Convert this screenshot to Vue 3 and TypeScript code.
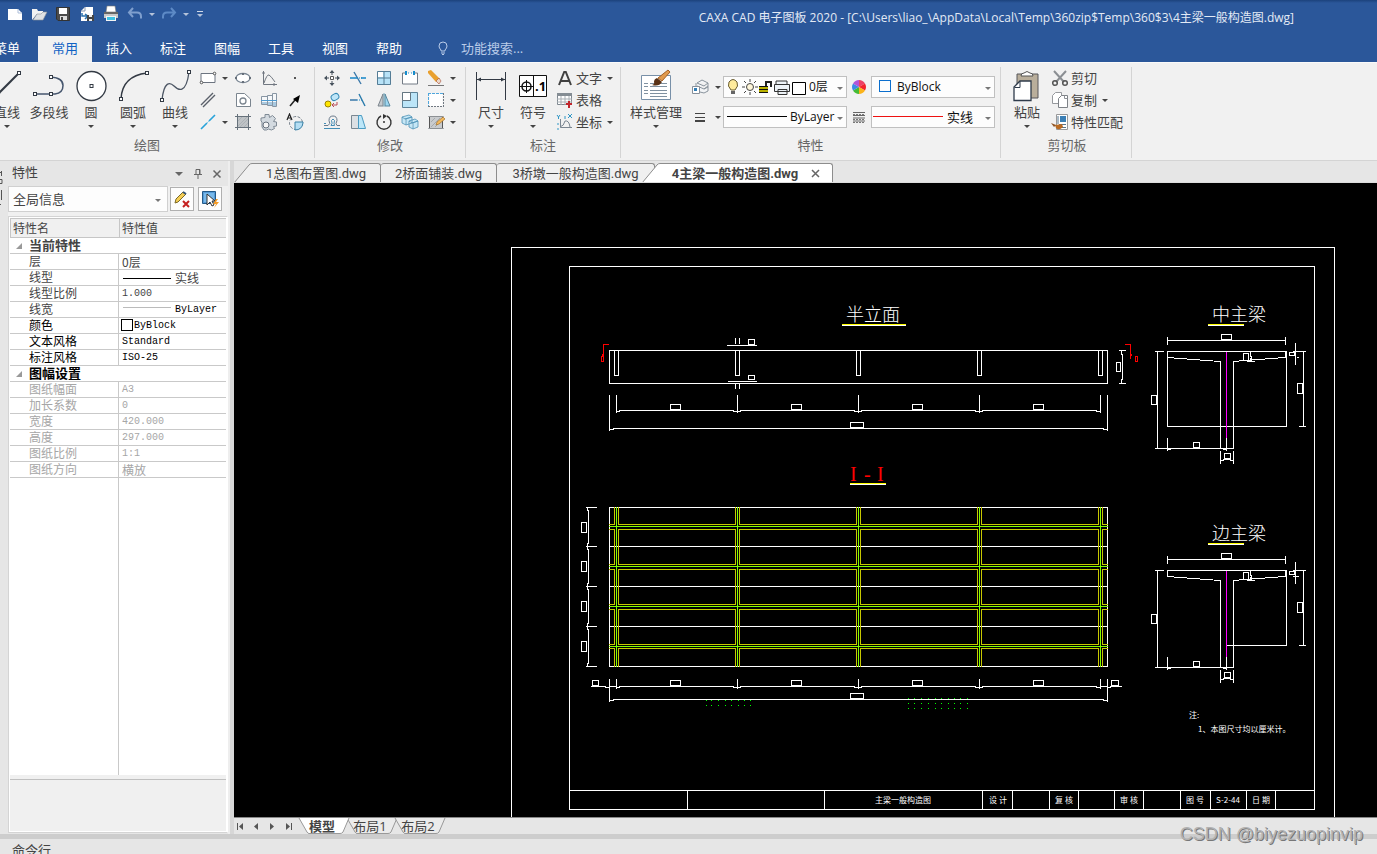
<script setup lang="ts">
import { ref } from 'vue'

interface Tool { icon: string; label: string; more?: boolean }
interface Row { name: string; value: string; kind?: string; dark?: boolean; dim?: boolean }

const quick: Tool[] = [
  { icon: 'fileNew', label: '新建' },
  { icon: 'folder', label: '打开' },
  { icon: 'save', label: '保存' },
  { icon: 'saveAs', label: '另存为' },
  { icon: 'print', label: '打印' },
  { icon: 'undo', label: '撤销', more: true },
  { icon: 'redo', label: '恢复', more: true },
]
const menus = ['菜单', '常用', '插入', '标注', '图幅', '工具', '视图', '帮助']
const activeMenu = ref('常用')
const query = ref('')

const drawBig: Tool[] = [
  { icon: 'line', label: '直线', more: true },
  { icon: 'polyline', label: '多段线' },
  { icon: 'circle', label: '圆', more: true },
  { icon: 'arc', label: '圆弧', more: true },
  { icon: 'curve', label: '曲线', more: true },
]
const drawSmall: Tool[] = [
  { icon: 'rect', label: '矩形', more: true },
  { icon: 'ellipse', label: '椭圆' },
  { icon: 'formula', label: '公式曲线' },
  { icon: 'point', label: '点' },
  { icon: 'parallel', label: '平行线' },
  { icon: 'region', label: '局部放大' },
  { icon: 'shaft', label: '孔轴' },
  { icon: 'arrow', label: '箭头' },
  { icon: 'axis', label: '中心线', more: true },
  { icon: 'hatch', label: '剖面线' },
  { icon: 'gear', label: '齿形' },
  { icon: 'detail', label: '填充' },
]
const editSmall: Tool[] = [
  { icon: 'move', label: '平移' },
  { icon: 'trim', label: '裁剪' },
  { icon: 'array', label: '阵列' },
  { icon: 'breakAt', label: '打断' },
  { icon: 'erase', label: '删除', more: true },
  { icon: 'copyMove', label: '平移复制' },
  { icon: 'extend', label: '延伸' },
  { icon: 'mirror', label: '镜像' },
  { icon: 'scale', label: '缩放' },
  { icon: 'explode', label: '分解', more: true },
  { icon: 'offset', label: '等距线' },
  { icon: 'stretch', label: '拉伸' },
  { icon: 'rotate', label: '旋转' },
  { icon: 'block', label: '块' },
  { icon: 'editHatch', label: '编辑剖面', more: true },
]
const noteBig: Tool[] = [
  { icon: 'dimension', label: '尺寸', more: true },
  { icon: 'symbol', label: '符号', more: true },
]
const noteSmall: Tool[] = [
  { icon: 'text', label: '文字', more: true },
  { icon: 'table', label: '表格' },
  { icon: 'coord', label: '坐标', more: true },
]
const clipSmall: Tool[] = [
  { icon: 'cut', label: '剪切' },
  { icon: 'copy', label: '复制', more: true },
  { icon: 'match', label: '特性匹配' },
]

const current: Row[] = [
  { name: '层', value: '0层', kind: 'cjk' },
  { name: '线型', value: '实线', kind: 'line' },
  { name: '线型比例', value: '1.000' },
  { name: '线宽', value: 'ByLayer', kind: 'thin' },
  { name: '颜色', value: 'ByBlock', kind: 'swatch', dark: true },
  { name: '文本风格', value: 'Standard', dark: true },
  { name: '标注风格', value: 'ISO-25', dark: true },
]
const sheet: Row[] = [
  { name: '图纸幅面', value: 'A3' },
  { name: '加长系数', value: '0' },
  { name: '宽度', value: '420.000' },
  { name: '高度', value: '297.000' },
  { name: '图纸比例', value: '1:1' },
  { name: '图纸方向', value: '横放', kind: 'cjk' },
]
const groups = [
  { title: '当前特性', rows: current, dim: false },
  { title: '图幅设置', rows: sheet, dim: true },
]

const docs = ['1总图布置图.dwg', '2桥面铺装.dwg', '3桥墩一般构造图.dwg', '4主梁一般构造图.dwg']
const activeDoc = ref(3)
const sheets = ['模型', '布局1', '布局2']
const activeSheet = ref(0)

const node = (x: number, y: number) => `<rect x="${x - 1.5}" y="${y - 1.5}" width="3" height="3" fill="#fff" stroke="#333a44"/>`

const icons: Record<string, string> = {
  fileNew: '<path d="M2 4h10l4 4v7H2z" fill="#fff"/><path d="M12 4v4h4" fill="none" stroke="#aebfda"/>',
  folder: '<path d="M2 15V4h5l1 2h5v3H7z" fill="#f2f2f2"/><path d="M3 15l4-6h4l2-2h4l-4 8z" fill="#dfe1e3" stroke="#8b9098" stroke-width=".6"/>',
  save: '<path d="M2.500 2.500h13v13H4l-1.500-1.500z" fill="#4c4c4c" stroke="#333"/><path d="M5 3h8v6H5z" fill="#fff"/><path d="M6 11h7v4H6z" fill="#ddd"/><path d="M7 12h2v3H7z" fill="#444"/>',
  saveAs: '<path d="M3 6l4-4h8v14H3z" fill="#fff"/><path d="M3 6h4V2" fill="none" stroke="#8898b0"/><path d="M4 8v3h5M7 9l3 2-3 3" fill="none" stroke="#2a70ad" stroke-width="1.500"/><path d="M9 10h7v6H9z" fill="#444"/><path d="M11 10h3v2h-3zM11 14h3v2h-3z" fill="#eee"/>',
  print: '<path d="M5 1h8l1 6H4z" fill="#fff" stroke="#777" stroke-width=".6"/><path d="M2 7h14v6H2z" fill="#c9c9c9"/><path d="M2 7h14v2H2z" fill="#666"/><path d="M4 11h10v5H4z" fill="#f4f4f4"/><path d="M5 12h8v3H5z" fill="#3ec3e4"/>',
  undo: '<path d="M7 3L3 7.500 7 12M3 7.500h8q4 0 4 4v2" fill="none" stroke="#7f9fce" stroke-width="2"/>',
  redo: '<path d="M11 3L15 7.500 11 12M15 7.500H7q-4 0-4 4v2" fill="none" stroke="#5d8ac6" stroke-width="2"/>',
  line: '<path d="M3 30L29 4" stroke="#333a44" stroke-width="2"/>' + node(29, 4) + node(3, 30),
  polyline: '<path d="M3 25h20q8-1 8-8.500T19 8" fill="none" stroke="#46566e" stroke-width="1.500"/>' + node(3, 25) + node(19, 25) + node(19, 8),
  circle: '<circle cx="17.500" cy="17" r="14.500" fill="#fff" stroke="#333a44" stroke-width="1.300"/>' + node(17.5, 17),
  arc: '<path d="M5 30Q6 7 31 4" fill="none" stroke="#333a44" stroke-width="1.500"/>' + node(5, 30) + node(31, 4),
  curve: '<path d="M4 31C6 12 12 13 16 17s12 9 15-14" fill="none" stroke="#4c5664" stroke-width="1.300"/>' + node(4, 31) + node(31, 3),
  rect: '<path d="M2 4.500h14v9H2z" fill="#fff" stroke="#6c7480"/><circle cx="2.500" cy="13.500" r="1.300" fill="#fff" stroke="#555"/><circle cx="15.500" cy="4.500" r="1.300" fill="#fff" stroke="#555"/>',
  ellipse: '<ellipse cx="9" cy="9" rx="7" ry="4.500" fill="#fff" stroke="#7b8794" stroke-width="1.300"/><path d="M1 8h2v2H1zM15 8h2v2h-2zM8 4h2v2H8zM8 12h2v2H8z" fill="#666f7a"/>',
  formula: '<path d="M3.500 2v13.500H17M2 4h3M14 14v3" fill="none" stroke="#707780"/><path d="M4 14Q7 5 9 6t6 7" fill="none" stroke="#707780"/>',
  point: '<path d="M8 8h2v2H8z" fill="#555"/>',
  parallel: '<path d="M2 14L14 2M4 16L16 4" stroke="#5a606a" stroke-width="1.400"/>',
  region: '<path d="M2.500 2.500h8l6 5.500v7.500h-14z" fill="#fff" stroke="#7b858f"/><circle cx="9" cy="10" r="3" fill="#fff" stroke="#7b858f" stroke-width="1.300"/>',
  shaft: '<path d="M1.500 5.500h6v8h-6zM7.500 4.500h5v10h-5zM12.500 2.500h4v13h-4z" fill="#f6f8fa" stroke="#8795a3"/><path d="M2 11h5v2H2zM8 11h4v3H8zM13 11h3v4h-3z" fill="#a9c9e0"/><path d="M1 9.500h16" stroke="#4d9ad0"/>',
  arrow: '<path d="M4 15l5-6" stroke="#222" stroke-width="1.500"/><path d="M14 4l-7 4 5 4z" fill="#000"/>',
  axis: '<path d="M2 16l6-6M10 8l6-6" stroke="#28a3da" stroke-width="1.600"/><path d="M8.500 9.500l1-1" stroke="#28a3da"/>',
  hatch: '<path d="M3 3h12v12H3z" fill="#bfc3c6"/><path d="M4 8l4-4M4 13l9-9M6 14l8-8M10 14l4-4" stroke="#a4aab0" stroke-width=".7"/><path d="M3.500 1v16M14.500 1v16M1 3.500h16M1 14.500h16" fill="none" stroke="#66717b"/>',
  gear: '<path d="M5 1.500h4l.5 3 3-2 3 3-2 3 3 .500v4l-3 .500 1 2-3 1.500-3-1-2 1H4l-2-3v-5l-1-1V5l4-.500z" fill="#d3dae0" stroke="#7f8a95"/><circle cx="6" cy="12" r="3" fill="#f6f6f6" stroke="#65707c"/>',
  detail: '<circle cx="10" cy="10" r="6.500" fill="none" stroke="#77818b" stroke-dasharray="3 1.500"/><path d="M9 9h8v1q-1 7-8 7z" fill="#b5def3" stroke="#3b82a7"/><path d="M1 7L3.500 1 6 7M2 5h3" fill="none" stroke="#222" stroke-width="1.200"/>',
  move: '<path d="M7.500 7.500h3v3h-3z" fill="#fff" stroke="#555"/><path d="M9 2v4M9 12v4M2 9h4M12 9h4" fill="none" stroke="#46515c"/><path d="M9 1l2.500 3h-5zM9 17l2.500-3h-5zM1 9l3-2.500v5zM17 9l-3-2.500v5z" fill="#46515c"/>',
  trim: '<path d="M1 9h7M12 9h5" stroke="#1787c8" stroke-width="1.500"/><path d="M5 3l7 12" stroke="#3977a8" stroke-width="1.400"/><path d="M8 9h5" stroke="#1787c8" stroke-dasharray="1 1"/>',
  array: '<path d="M2 2h14v14H2z" fill="#b7e2f7"/><path d="M3 3h5v5H3z" fill="#fff"/><path d="M2.500 2.500h13v13h-13zM9 2v14M2 9h14" fill="none" stroke="#557c95"/>',
  breakAt: '<path d="M5 4H1.500v11h15V4H13" fill="#fff" stroke="#737b85"/><path d="M5 2v4M13 2v4" stroke="#178dcc" stroke-width="2"/><path d="M7 4h1M10 4h1" stroke="#178dcc"/>',
  erase: '<path d="M1 2l3-1 9 9-4 3-8-9z" fill="#e9a02e"/><path d="M9 12l3-3 2 3-2 3z" fill="#ead8c8" stroke="#a84a30" stroke-width=".6"/><path d="M1 16.500h16" stroke="#777"/>',
  copyMove: '<circle cx="5" cy="13" r="3" fill="#ffe500" stroke="#9c8200"/><rect x="8" y="3" width="8" height="6" rx="3" fill="#bfe6f8" stroke="#3389b5" transform="rotate(-30 12 6)"/><path d="M9 14h5v-3M11 12l-2 2 2 2" fill="none" stroke="#b94a55"/>',
  extend: '<path d="M1 9h7" stroke="#3977a8" stroke-width="1.500"/><path d="M8 9h5" stroke="#1787c8" stroke-dasharray="1 1"/><path d="M10 3l6 12" stroke="#287aab" stroke-width="1.400"/>',
  mirror: '<path d="M8 3v12H3z" fill="#c5cace" stroke="#7c858d"/><path d="M10 3v12h5z" fill="#9ed7f1" stroke="#58879e"/><path d="M9 2v14" stroke="#79a9be"/>',
  scale: '<path d="M1.500 1.500h15v15h-15z" fill="#bce5f8" stroke="#5d8399"/><path d="M1.500 1.500h8v8h-8z" fill="#fff" stroke="#657681"/>',
  explode: '<path d="M2.500 2.500h13v13h-13z" fill="#fff"/><path d="M1 2.500h16M1.500 2v14" stroke="#4fa6dc" stroke-dasharray="3 1"/><path d="M1 15.500h16M16.500 2v14" stroke="#707881" stroke-dasharray="2 1"/>',
  offset: '<path d="M1 12.500h4Q8 11 6 7.500 6 3 10 3t4 4.500q-2 3.500 0 5h3" fill="none" stroke="#6a7a8b"/><path d="M1 15.500h16M1 10.500h2M8 12.500q2-2 .5-5 1.500-3 3 0-1 3 0 5z" fill="none" stroke="#438db6"/>',
  stretch: '<path d="M2.500 2.500h7v13h-7z" fill="#dce0e4" stroke="#7a8791"/><path d="M9.500 2.500h3l4 13h-7z" fill="#bce6f8" stroke="#4b9bc2"/>',
  rotate: '<path d="M6 3A7 7 0 1 0 12 3" fill="none" stroke="#333" stroke-width="1.400"/><path d="M8 1l4 2-4 3z" fill="#333"/><circle cx="9" cy="9" r="1" fill="#333"/>',
  block: '<path d="M1 4l7-2 3 2-7 2zM1 4v6l4 2V6M4 6l7-2v6l-6 2M8 8l6-2 3 2-6 2zM8 8v6l4 2v-6M11 10l6-2v6l-5 2" fill="#c5e7f6" stroke="#4f93b8" stroke-width=".8"/>',
  editHatch: '<path d="M2.500 3.500h13v12h-13z" fill="#c9cbcd" stroke="#555"/><path d="M4 9l4-4M4 14l9-9M8 14l6-6M1 3.500h16M1 15.500h16" stroke="#9a9fa4" stroke-width=".8"/><path d="M9 12l1-3 6-5 2 2-6 5z" fill="#f3b95d" stroke="#996720" stroke-width=".6"/>',
  dimension: '<path d="M2.500 3v28M31.500 3v28M3 10.500h28" stroke="#333a44"/><path d="M3 10.500l4-2v4zM31 10.500l-4-2v4z" fill="#333a44"/>',
  symbol: '<path d="M3.500 6.500h27v21h-27z" fill="#fff" stroke="#111"/><path d="M17.500 7v20M4 17.500h13M10.500 11v13" stroke="#111"/><circle cx="10.500" cy="17.500" r="4.500" fill="none" stroke="#111" stroke-width="1.500"/><text x="19" y="22" font-size="13" font-weight="700" font-family="Open Sans">.1</text>',
  text: '<path d="M3 16L8.200 3h1.600L15 16M5 12h8" fill="none" stroke="#414141" stroke-width="2"/>',
  table: '<path d="M1.500 2.500h14v11h-14z" fill="#fff" stroke="#7f8890"/><path d="M1 2h15v3H1z" fill="#858d94"/><path d="M1 8h15M1 11h15M5 5v9M9 5v9M13 5v9" stroke="#a8afb4"/><path d="M12 10h2v2h2v2h-2v3h-2v-3h-2v-2h2z" fill="#c1272d"/>',
  coord: '<path d="M4.500 6v8.500H16M4 14q4-1 5-6 4-1 5 6" fill="none" stroke="#7b8691"/><path d="M1 2l1.500 2L4 2M2.500 4v2M12 1l4 4M16 1l-4 4M9 3v3M2 10v2M2 15v2" fill="none" stroke="#3096c5"/>',
  style: '<path d="M2.500 6.500h29v24h-29z" fill="#fff" stroke="#7890a8"/><path d="M5 14.500h4M11 14.500h17M5 17.500h4M11 17.500h17M5 21.500h4M11 21.500h17M5 24.500h4M11 24.500h17M11 27.500h17" stroke="#8091a0"/><path d="M29 1l2 2-8 9-4-3z" fill="#e19a4d" stroke="#a46125"/><path d="M18 9l5 4q-3 5-10 3 3-1 2-3 0-3 3-4z" fill="#593116"/>',
  layers: '<path d="M6 5l5-3 6 3v8l-4 2-4-1M6 5l7 3 4-3M6 8l7 3 4-3M5 5v3M13 11l4-2" fill="#f2f4f6" stroke="#8a949d"/><path d="M1.500 8.500h7v7h-7z" fill="#fff" stroke="#87909a"/><path d="M3 10h3v3H3z" fill="#327eb6"/>',
  weights: '<path d="M4 5.500h10M4 9.500h10" stroke="#444"/><path d="M4 13h10" stroke="#444" stroke-width="2"/>',
  linetypes: '<path d="M3 4.500h12M3 7.500h12M3 10h12M3 13h12" stroke="#666"/><path d="M3 6.500h12M3 11.500h12M3 14.500h12" stroke="#777" stroke-dasharray="2 1"/>',
  wheel: '<g transform="translate(9 9)"><path d="M0 0V-7A7 7 0 0 1 6-3.500z" fill="#ec4266"/><path d="M0 0L6-3.500A7 7 0 0 1 6 3.500z" fill="#f3232c"/><path d="M0 0L6 3.500A7 7 0 0 1 0 7z" fill="#fbb41b"/><path d="M0 0V7A7 7 0 0 1-6 3.500z" fill="#46bb35"/><path d="M0 0L-6 3.500A7 7 0 0 1-6-3.500z" fill="#3b8be6"/><path d="M0 0L-6-3.500A7 7 0 0 1 0-7z" fill="#b255d8"/></g>',
  paste: '<path d="M7 5h21v24H7z" fill="#b9ae9b" stroke="#56575a"/><path d="M11 7q0-3 3-3 3-3 6 0 3 0 3 3z" fill="#fff" stroke="#555"/><path d="M4 31.500V18l6-6h11v19.500z" fill="#fff" stroke="#2f3b4b" stroke-width="1.300"/><path d="M4.500 18.500H10V12" fill="none" stroke="#2f3b4b"/>',
  cut: '<path d="M3 2l10 11M15 2L5 13" stroke="#8b8f93" stroke-width="2"/><circle cx="4" cy="14" r="2.300" fill="none" stroke="#555" stroke-width="1.500"/><circle cx="14" cy="14" r="2.300" fill="none" stroke="#555" stroke-width="1.500"/>',
  copy: '<path d="M1.500 4.500l3-3h6v11h-9z" fill="#fff" stroke="#96999d"/><path d="M7.500 7.500l3-3h6v12h-9z" fill="#fff" stroke="#7e8287"/><path d="M13.500 4.500v3h3" fill="none" stroke="#8e9297"/>',
  match: '<path d="M5.500 1.500h11v15h-11z" fill="#fff" stroke="#999"/><path d="M9 3h6v6H9z" fill="#3a7fb5"/><path d="M8 11.500h7M9 14.500h6M7 3v8" stroke="#57758c"/><path d="M4 12l7-1 1 3q-4 4-7 1z" fill="#b96a22"/><path d="M0 10l5 2-2 2z" fill="#8e5527"/>',
  cleanPick: '<path d="M2 13l1-4 7-7 3 2-8 8z" fill="#f5ce54" stroke="#7b6a28"/><path d="M10 2l3 2" stroke="#35577a" stroke-width="2"/><path d="M10 11l6 6M16 11l-6 6" stroke="#c52020" stroke-width="2"/>',
  quickPick: '<path d="M1.500 1.500h13v12h-13z" fill="#559bd7" stroke="#245a88"/><path d="M3 3h10v9H3z" fill="#79b9ea"/><path d="M6 4v11l3-3 2 4 2-1-2-4h3z" fill="#fff" stroke="#333"/><path d="M15 9l-3 5h3l-2 4 5-6h-3l2-3z" fill="#f69b24"/>',
}

/* Drawing primitives: one-pixel strokes built as filled strips. */
const H = (x1: number, x2: number, y: number) => `M${x1} ${y}H${x2 + 1}V${y + 1}H${x1}Z`
const V = (x: number, y1: number, y2: number) => `M${x} ${y1}H${x + 1}V${y2 + 1}H${x}Z`
const B = (x1: number, y1: number, x2: number, y2: number) => H(x1, x2, y1) + H(x1, x2, y2) + V(x1, y1, y2) + V(x2, y1, y2)

const axes = [616, 737, 858, 979, 1100]
const boxes = [670, 791, 912, 1033]
const girders = [526, 566, 606, 646]

function spanDims(y: number): string {
  let d = ''
  for (let i = 0; i < 4; i++) {
    const a = axes[i], b = axes[i + 1]
    d += H(a + 3, b - 4, y) + H(b - 4, b, y + 1) + H(a, a + 3, y + 1) + B(boxes[i], y - 6, boxes[i] + 10, y - 1)
  }
  return d
}
function totalDim(y: number): string {
  return H(613, 1103, y) + H(609, 613, y + 1) + H(1103, 1107, y + 1) + B(850, y - 6, 863, y - 1)
}

const elevation = B(609, 350, 1107, 383)
  + axes.map(x => B(x - 2, 350, x + 2, 375) + V(x, 395, 412)).join('')
  + V(735, 338, 343) + V(739, 338, 343) + V(735, 384, 388) + V(739, 384, 388)
  + H(727, 756, 345) + H(728, 756, 381) + B(748, 339, 754, 344) + B(748, 375, 754, 379)
  + H(1119, 1125, 350) + H(1119, 1125, 383) + V(1121, 350, 354) + V(1122, 354, 379) + V(1121, 379, 383) + B(1116, 362, 1120, 371)
  + V(609, 395, 430) + V(1107, 395, 430) + spanDims(410) + totalDim(428)

const cutMarks = V(603, 344, 356) + H(603, 608, 344) + B(601, 356, 603, 361) + V(602, 354, 356)
  + H(1125, 1130, 344) + V(1130, 344, 358) + V(1131, 354, 355) + B(1135, 356, 1137, 361)

const planWhite = B(609, 507, 1107, 666) + [546, 586, 626].map(y => H(609, 1107, y)).join('')
  + [507, 546, 586, 626, 666].map(y => H(586, 596, y)).join('')
  + [507, 546, 586, 626].map((y, i) => {
    const e = [546, 586, 626, 666][i]
    return V(587, y, y + 3) + V(588, y + 3, e - 3) + V(587, e - 3, e)
  }).join('')
  + [522, 561, 601, 641].map(y => B(581, y, 586, y + 10)).join('')
  + axes.map(x => V(x, 679, 688)).join('') + V(609, 679, 701) + V(1107, 679, 701)
  + spanDims(686) + totalDim(699)
  + H(591, 605, 686) + H(605, 609, 687) + H(609, 616, 686) + H(1100, 1107, 686) + H(1107, 1110, 687) + H(1110, 1121, 686)
  + B(592, 680, 598, 685) + B(1111, 680, 1118, 685)

const planYellow = (() => {
  let d = ''
  const xs = [607, ...axes, 1109]
  const ys = [505, ...girders, 668]
  for (const g of girders) {
    const low = g === 646 ? g + 2 : g + 3
    for (let i = 0; i < xs.length - 1; i++) d += H(xs[i] + 2, xs[i + 1] - 2, g - 2) + H(xs[i] + 2, xs[i + 1] - 2, low)
  }
  for (const x of axes) {
    for (let i = 0; i < ys.length - 1; i++) {
      const top = i === 0 ? 507 : ys[i] + 3
      d += V(x - 2, top, ys[i + 1] - 2) + V(x + 2, top, ys[i + 1] - 2)
    }
  }
  return d
})()
const planGreen = axes.map(x => V(x, 507, 666)).join('') + girders.map(y => H(609, 1107, y)).join('')
const dots = [700, 705].flatMap(y => [706, 711, 718, 725, 731, 738, 744, 750].map(x => H(x, x, y))).join('')
  + [698, 703, 708].flatMap(y => [908, 914, 921, 928, 935, 941, 948, 954, 960, 967].map(x => H(x, x, y))).join('')

function section(edge: boolean): string {
  return H(1167, 1285, 340) + V(1167, 337, 344) + V(1285, 337, 344) + B(1221, 334, 1231, 339)
    + H(1167, 1286, 351) + V(1286, 351, 426) + V(1285, 351, 357)
    + (edge ? V(1167, 351, 357) + H(1226, 1286, 426) + H(1293, 1298, 357) : V(1167, 351, 426) + H(1167, 1286, 426) + H(1297, 1298, 357))
    + V(1220, 361, 448) + V(1233, 361, 448) + H(1155, 1233, 448)
    + V(1157, 351, 448) + H(1155, 1163, 351) + B(1151, 395, 1156, 404)
    + V(1167, 438, 450) + H(1167, 1170, 449) + V(1226, 438, 450) + H(1223, 1226, 449) + B(1193, 442, 1199, 447)
    + V(1220, 451, 463) + V(1233, 451, 463) + H(1220, 1223, 460) + H(1223, 1230, 459) + H(1230, 1233, 460) + B(1224, 453, 1230, 458)
    + B(1243, 353, 1248, 360) + V(1250, 352, 356) + V(1251, 356, 359) + V(1250, 358, 361) + H(1247, 1254, 361)
    + V(1295, 343, 364) + B(1289, 352, 1294, 355) + H(1293, 1305, 351)
    + V(1303, 351, 426) + H(1299, 1305, 426) + B(1297, 383, 1302, 393)
}
const sections = [
  { title: '中主梁', shift: 0, path: section(false) },
  { title: '边主梁', shift: 219, path: section(true) },
]

const frame = H(511, 1334, 247) + V(511, 247, 818) + V(1334, 247, 818) + B(569, 266, 1314, 809) + H(569, 1314, 790)
  + [687, 824, 982, 1012, 1049, 1078, 1114, 1143, 1180, 1210, 1246, 1275].map(x => V(x, 790, 809)).join('')

const blockTexts = [
  { x: 903, t: '主梁一般构造图' }, { x: 998, t: '设 计' }, { x: 1064, t: '复 核' }, { x: 1129, t: '审 核' },
  { x: 1195, t: '图 号' }, { x: 1228, t: 'S-2-44' }, { x: 1261, t: '日 期' },
]
</script>

<template>
  <div class="app">
    <header class="top">
      <div class="title-row">
        <div class="quick">
          <template v-for="q in quick" :key="q.icon">
            <button class="q-btn" :aria-label="q.label"><svg width="18" height="18" v-html="icons[q.icon]" /></button>
            <button v-if="q.more" class="q-more" :aria-label="q.label + '列表'"><i class="caret pale" /></button>
          </template>
          <button class="q-more custom" aria-label="自定义快速访问"><i class="bar" /><i class="caret pale" /></button>
        </div>
        <div class="title">CAXA CAD 电子图板 2020 - [C:\Users\liao_\AppData\Local\Temp\360zip$Temp\360$3\4主梁一般构造图.dwg]</div>
      </div>
      <nav class="menu">
        <button v-for="m in menus" :key="m" class="menu-tab" :class="{ active: m === activeMenu, first: m === '菜单' }" @click="activeMenu = m">{{ m }}</button>
        <label class="search">
          <svg width="12" height="14" aria-hidden="true"><path d="M4 9Q2 7 2 5a4 4 0 0 1 8 0q0 2-2 4v1H4zM4 12h4M5 13.500h2" fill="none" stroke="#b9cbe8" /></svg>
          <input v-model="query" aria-label="功能搜索" placeholder="功能搜索...">
        </label>
      </nav>
    </header>

    <section class="ribbon">
      <div class="group draw">
        <div class="tools">
          <button v-for="t in drawBig" :key="t.icon" class="big">
            <svg width="34" height="34" v-html="icons[t.icon]" /><span>{{ t.label }}</span><i class="caret" :class="{ none: !t.more }" />
          </button>
          <div class="grid draw-grid">
            <template v-for="(t, i) in drawSmall" :key="t.icon">
              <button class="small" :aria-label="t.label"><svg width="18" height="18" v-html="icons[t.icon]" /></button>
              <button v-if="t.more" class="more" :aria-label="t.label + '列表'"><i class="caret" /></button>
              <span v-else-if="i % 4 === 0" />
            </template>
          </div>
        </div>
        <div class="group-name">绘图</div>
      </div>

      <div class="group edit">
        <div class="tools">
          <div class="grid edit-grid">
            <template v-for="t in editSmall" :key="t.icon">
              <button class="small" :aria-label="t.label"><svg width="18" height="18" v-html="icons[t.icon]" /></button>
              <button v-if="t.more" class="more" :aria-label="t.label + '列表'"><i class="caret" /></button>
            </template>
          </div>
        </div>
        <div class="group-name">修改</div>
      </div>

      <div class="group note">
        <div class="tools">
          <button v-for="t in noteBig" :key="t.icon" class="big"><svg width="34" height="34" v-html="icons[t.icon]" /><span>{{ t.label }}</span><i class="caret" /></button>
          <div class="stack">
            <button v-for="t in noteSmall" :key="t.icon" class="wide"><svg width="18" height="18" v-html="icons[t.icon]" />{{ t.label }}<i v-if="t.more" class="caret" /></button>
          </div>
        </div>
        <div class="group-name">标注</div>
      </div>

      <div class="group props">
        <div class="tools">
          <button class="big style"><svg width="34" height="34" v-html="icons.style" /><span>样式管理</span><i class="caret" /></button>
          <div class="prop-grid">
            <button class="small" aria-label="图层"><svg width="18" height="18" v-html="icons.layers" /></button>
            <button class="more" aria-label="图层列表"><i class="caret" /></button>
            <div class="combo layer">
              <select aria-label="当前图层"><option>0层</option></select>
              <svg class="deco" width="84" height="20" aria-hidden="true">
                <path d="M7 13Q3 9 5 5q4-5 8 0 2 4-2 8z" fill="#ffeb9c" stroke="#695c32" /><path d="M7 14h4v3H7z" fill="#666" />
                <circle cx="26" cy="10" r="3.500" fill="#fff7da" stroke="#444" /><path d="M26 2v3M26 15v3M18 10h3M31 10h3M20 4l2 2M32 4l-2 2M20 16l2-2M32 16l-2-2" stroke="#444" />
                <path d="M35 9h9v7h-9z" fill="#b9b100" /><path d="M35 9.500h9M35 12.500h9M35 15.500h9" stroke="#111" /><path d="M42 9V5h5v5" fill="none" stroke="#222" stroke-width="2" />
                <path d="M52 7V4h11v3M50.500 7.500h15v7h-15zM54 12.500h9v5h-9z" fill="#edf2f6" stroke="#333" />
                <path d="M68.500 5.500h13v12h-13z" fill="#fff" stroke="#000" />
              </svg>
              <i class="caret soft" />
            </div>
            <button class="small" aria-label="颜色"><svg width="18" height="18" v-html="icons.wheel" /></button>
            <div class="combo color">
              <select aria-label="当前颜色"><option>ByBlock</option></select>
              <i class="deco blue-box" /><i class="caret soft" />
            </div>
            <button class="small" aria-label="线宽"><svg width="18" height="18" v-html="icons.weights" /></button>
            <button class="more" aria-label="线宽列表"><i class="caret" /></button>
            <div class="combo weight">
              <select aria-label="当前线宽"><option>ByLayer</option></select>
              <i class="deco rule black" /><i class="caret soft" />
            </div>
            <button class="small" aria-label="线型"><svg width="18" height="18" v-html="icons.linetypes" /></button>
            <div class="combo ltype">
              <select aria-label="当前线型"><option>实线</option></select>
              <i class="deco rule red" /><i class="caret soft" />
            </div>
          </div>
        </div>
        <div class="group-name">特性</div>
      </div>

      <div class="group clip">
        <div class="tools">
          <button class="big"><svg width="34" height="34" v-html="icons.paste" /><span>粘贴</span><i class="caret" /></button>
          <div class="stack">
            <button v-for="t in clipSmall" :key="t.icon" class="wide"><svg width="18" height="18" v-html="icons[t.icon]" />{{ t.label }}<i v-if="t.more" class="caret" /></button>
          </div>
        </div>
        <div class="group-name">剪切板</div>
      </div>
    </section>

    <main class="work">
      <div class="gutter"><svg width="8" height="44" aria-hidden="true"><path d="M0 11.500h2M1.500 10v5M0 18.500h2v4H0M1.500 29v10M0 43.500h1" fill="none" stroke="#555" /></svg></div>
      <aside class="panel">
        <div class="panel-head">
          <h2>特性</h2>
          <button aria-label="菜单"><i class="caret wide-caret" /></button>
          <button aria-label="固定"><svg width="10" height="12"><path d="M3 1.500h4v5H3zM1 6.500h8M5 7v4M6.500 2v4" fill="none" stroke="#666" /></svg></button>
          <button aria-label="关闭"><svg width="10" height="12"><path d="M1.500 2.500l7 7M8.500 2.500l-7 7" stroke="#666" stroke-width="1.500" /></svg></button>
        </div>
        <div class="panel-bar">
          <div class="combo info"><select aria-label="对象"><option>全局信息</option></select><i class="caret soft" /></div>
          <button class="tool-box" aria-label="清除选择"><svg width="18" height="18" v-html="icons.cleanPick" /></button>
          <button class="tool-box" aria-label="快速选择"><svg width="18" height="18" v-html="icons.quickPick" /></button>
        </div>
        <div class="sheet">
          <table>
            <thead><tr><th>特性名</th><th>特性值</th></tr></thead>
            <tbody v-for="g in groups" :key="g.title" :class="{ dim: g.dim }">
              <tr class="g-row"><th colspan="2"><i class="fold" />{{ g.title }}</th></tr>
              <tr v-for="r in g.rows" :key="r.name" :class="{ dark: r.dark }">
                <td>{{ r.name }}</td>
                <td :class="r.kind">
                  <i v-if="r.kind === 'line'" class="sample" /><i v-if="r.kind === 'thin'" class="sample pale-line" /><i v-if="r.kind === 'swatch'" class="chip" />{{ r.value }}
                </td>
              </tr>
            </tbody>
          </table>
          <div class="rest" />
          <div class="hint" />
        </div>
      </aside>
      <div class="splitter" />

      <section class="doc">
        <div class="doc-tabs">
          <button v-for="(d, i) in docs" :key="d" class="doc-tab" :class="['tab-' + i, { active: i === activeDoc }]" @click="activeDoc = i">
            <svg v-if="i === 0 || i === activeDoc" class="slope" width="18" height="20" aria-hidden="true"><path d="M0 20L15 2Q16 .500 18 .500V20z" :fill="i === activeDoc ? '#fff' : '#f0f0f0'" /><path d="M0 20L15 2Q16 .500 18 .500" fill="none" stroke="#8d8d8d" /></svg>
            <span class="doc-body" :class="{ flat: i === 0 || i === activeDoc }">{{ d }}<svg v-if="i === activeDoc" class="x" width="9" height="9" aria-hidden="true"><path d="M1 1l7 7M8 1L1 8" stroke="#666" stroke-width="1.500" /></svg></span>
          </button>
        </div>
        <svg class="canvas" role="img" aria-label="4主梁一般构造图">
          <g transform="translate(-234 -183)" shape-rendering="crispEdges">
            <path :d="frame" fill="#fff" />
            <path :d="elevation" fill="#fff" />
            <path :d="cutMarks" fill="#f00" />
            <path :d="planWhite" fill="#fff" />
            <path :d="planYellow" fill="#c8c800" />
            <path :d="planGreen" fill="#80ff00" />
            <path :d="dots" fill="#0f0" />
            <path :d="H(842, 905, 324) + H(850, 885, 483)" fill="#ff0" />
            <path :d="H(842, 905, 325) + H(850, 885, 484)" fill="#fff" />
            <text class="cad" x="846" y="321">半立面</text>
            <text class="cad mark" x="850 864 877" y="481">I-I</text>
            <g v-for="s in sections" :key="s.title" :transform="`translate(0 ${s.shift})`">
              <path :d="s.path" fill="#fff" />
              <path d="M1167 357.500L1220 361.500M1233 361.500L1285 357.500" stroke="#fff" fill="none" />
              <path :d="V(1226, 352, 437)" fill="#f0f" />
              <path :d="H(1208, 1243, 324)" fill="#ff0" />
              <path :d="H(1208, 1243, 325)" fill="#fff" />
              <text class="cad" x="1212" y="321">{{ s.title }}</text>
            </g>
            <text class="tiny" x="1189" y="718">注:</text>
            <text class="tiny" x="1198" y="732">1、本图尺寸均以厘米计。</text>
            <text v-for="b in blockTexts" :key="b.x" class="tiny mid" :x="b.x" y="803">{{ b.t }}</text>
          </g>
        </svg>
        <div class="sheets">
          <button v-for="(n, i) in ['首页', '上一页', '下一页', '末页']" :key="n" class="nav" :aria-label="n">
            <svg width="10" height="9"><path v-if="i < 2" d="M7 1v7L3 4.500z" fill="#555" /><path v-else d="M3 1v7l4-3.500z" fill="#555" /><path v-if="i === 0" d="M1.500 1v7" stroke="#555" /><path v-if="i === 3" d="M8.500 1v7" stroke="#555" /></svg>
          </button>
          <button v-for="(s, i) in sheets" :key="s" class="sheet-tab" :class="{ active: i === activeSheet }" @click="activeSheet = i">
            <svg width="52" height="16" aria-hidden="true"><path d="M1 0l8 14q1 1.500 2 1.500h31q2 0 3-1.500l6-14" :fill="i === activeSheet ? '#fff' : '#ebebeb'" stroke="#999" /></svg>
            <span>{{ s }}</span>
          </button>
        </div>
      </section>
    </main>

    <footer class="command"><span>命令行</span></footer>
    <div class="watermark">CSDN @biyezuopinvip</div>
  </div>
</template>

<style>
body { margin: 0; overflow: hidden; }
</style>

<style scoped>
* { box-sizing: border-box; }
.app { position: relative; display: flex; flex-direction: column; height: 100vh; overflow: hidden; background: #e6e6e6; color: #444; font: 13px/18px "Open Sans", "Noto Sans CJK SC", sans-serif; }
button { padding: 0; border: 0; background: none; color: inherit; font: inherit; }
svg { display: block; flex: none; }
i { display: block; }

.caret { width: 0; height: 0; border: 3px solid transparent; border-top-color: #444; border-bottom: 0; }
.caret.pale { border-top-color: #b5c3da; }
.caret.soft { border-top-color: #777; }
.caret.none { visibility: hidden; }

.top { flex: none; background: linear-gradient(#1c427c, #2b579a 3px); color: #fff; }
.title-row { display: flex; height: 36px; padding: 0 83px 0 3px; }
.quick { display: flex; align-items: center; height: 28px; }
.q-btn { display: grid; place-items: center; width: 24px; height: 24px; }
.q-more { display: grid; place-items: center; width: 10px; height: 24px; }
.custom { align-content: center; gap: 2px; margin-left: 4px; }
.custom .bar { width: 6px; height: 1px; background: #d0d9e8; }
.title { flex: 1; overflow: hidden; font-size: 12px; line-height: 35px; text-align: right; white-space: nowrap; color: #e3eaf5; }
.menu { display: flex; height: 26px; }
.menu-tab { width: 54px; padding-bottom: 2px; text-align: center; }
.menu-tab.first { margin-left: -16px; padding-right: 8px; }
.menu-tab.active { background: #f1f1f1; color: #0f62c4; }
.search { display: flex; align-items: center; gap: 12px; padding: 0 0 2px 21px; }
.search input { width: 120px; padding: 0; border: 0; outline: 0; background: none; color: #fff; font: inherit; }
.search input::placeholder { color: #b9cbe8; opacity: 1; }

.ribbon { flex: none; display: flex; height: 99px; padding: 4px 0; border-top: 1px solid #fafafa; border-bottom: 1px solid #d4d4d4; background: #f1f1f1; }
.group { display: flex; flex-direction: column; height: 91px; border-right: 1px solid #d4d4d4; }
.tools { display: flex; height: 68px; }
.group-name { padding-right: 4px; line-height: 25px; text-align: center; color: #666; }
.draw { width: 315px; }
.draw .tools { margin-left: -14px; }
.draw .group-name { padding-right: 20px; }
.edit { width: 151px; padding-left: 4px; }
.note { width: 155px; padding-left: 4px; }
.props { width: 380px; padding-left: 4px; }
.clip { width: 131px; padding-left: 6px; }
.big { display: flex; flex-direction: column; align-items: center; width: 42px; padding-top: 2px; white-space: nowrap; }
.big span { line-height: 18px; }
.big .caret { margin-top: 4px; }
.style { width: 62px; }
.grid { display: grid; grid-auto-rows: 22px; }
.draw-grid { grid-template-columns: 24px 10px 26px 26px 26px; }
.edit-grid { grid-template-columns: repeat(5, 26px) 8px; }
.small, .more { display: grid; place-items: center; }
.stack { display: flex; flex-direction: column; }
.wide { display: flex; align-items: center; gap: 2px; height: 22px; padding-left: 2px; white-space: nowrap; }
.wide .caret { margin-left: 3px; }
.clip .wide { padding-left: 4px; }
.prop-grid { display: grid; grid-template-columns: 26px 10px 124px 24px 124px; grid-auto-rows: 22px; gap: 8px 0; align-content: start; padding-top: 9px; }
.combo { position: relative; }
.combo select { width: 100%; height: 100%; padding: 0 10px 0 4px; border: 1px solid #c0c0c0; border-radius: 0; outline: 0; appearance: none; background: #fdfdfd; color: #111; font: inherit; font-size: 12px; }
.combo > .caret { position: absolute; right: 4px; top: 50%; pointer-events: none; }
.deco { position: absolute; left: 1px; top: 1px; pointer-events: none; }
.combo.layer select { padding-left: 85px; }
.combo.color select { padding-left: 25px; }
.combo.weight select { padding-left: 66px; }
.combo.ltype select { padding-left: 75px; font-size: 13px; }
.blue-box { left: 8px; top: 4px; width: 12px; height: 12px; border: 1px solid #0b6fce; }
.rule { top: 10px; left: 4px; width: 60px; height: 1px; background: #000; }
.rule.red { left: 2px; width: 70px; background: #e11; }
.clip .big { width: 40px; }

.work { flex: 1; display: flex; min-height: 0; }
.gutter { flex: none; width: 8px; overflow: hidden; }
.panel { flex: none; display: flex; flex-direction: column; width: 220px; min-height: 0; }
.panel-head { display: flex; align-items: center; height: 25px; padding: 0 2px 0 4px; }
.panel-head h2 { flex: 1; margin: 0; padding-bottom: 3px; font-size: 13px; font-weight: 400; line-height: 22px; }
.panel-head button { display: grid; place-items: center; width: 19px; height: 20px; }
.wide-caret { border-width: 4px; border-bottom: 0; border-top-color: #666; }
.panel-bar { display: flex; height: 30px; background: #f0f0f0; }
.combo.info { width: 160px; height: 26px; }
.combo.info select { border-color: #d0d0d0; font-size: 13px; color: #444; }
.combo.info > .caret { right: 7px; }
.tool-box { display: grid; place-items: center; width: 24px; height: 24px; margin: 1px 2px; border: 1px solid #b0b0b0; background: #fdfdfd; }
.sheet { flex: 1; display: flex; flex-direction: column; min-height: 0; margin-bottom: 1px; padding: 1px; border: 1px solid #d4d4d4; border-right-color: #fff; background: #fff; }
table { width: 100%; table-layout: fixed; border-collapse: separate; border-spacing: 0; font-size: 12px; line-height: 15px; }
thead th { height: 20px; padding: 0 2px; border: 1px solid #c6c6c6; border-width: 1px 0 1px 1px; background: #f0f0f0; font-weight: 400; text-align: left; }
thead th:first-child { width: 109px; }
tbody td, tbody th { height: 16px; padding: 0; border-bottom: 1px solid #c9c9c9; white-space: nowrap; }
tbody td:first-child { padding-left: 19px; border-right: 1px solid #c9c9c9; }
tbody td:last-child { padding-left: 3px; font-family: "Liberation Mono", "Noto Sans CJK SC", monospace; font-size: 10px; }
tbody td:last-child.cjk, tbody td:last-child.line { font-size: 12px; font-family: "Noto Sans CJK SC", sans-serif; }
.g-row th { position: relative; padding-left: 19px; font-size: 13px; font-weight: 700; text-align: left; }
.fold { position: absolute; left: 6px; top: 5px; border: 3px solid transparent; border-right-color: #999; border-bottom-color: #999; }
.dark td { color: #000; }
.dim .g-row th { color: #000; }
.dim td { color: #a6a6a6; }
.sample { display: inline-block; width: 48px; height: 1px; margin: 0 4px 0 1px; background: #000; vertical-align: 4px; }
.pale-line { background: #bbb; }
.thin { color: #000; }
.chip { display: inline-block; width: 12px; height: 12px; margin: 0 1px 0 -1px; border: 1px solid #000; vertical-align: -3px; background: #fff; }
.rest { flex: 1; width: 109px; border-right: 1px solid #c9c9c9; }
.hint { height: 56px; border-top: 4px solid #f0f0f0; background: linear-gradient(#c0c0c0 1px, #f0f0f0 1px); }
.splitter { flex: none; width: 6px; border-right: 4px solid #d7d7d7; background: #eee; }

.doc { flex: 1; display: flex; flex-direction: column; min-width: 0; }
.doc-tabs { display: flex; height: 22px; padding-top: 2px; overflow: hidden; border-bottom: 1px solid #ddd; }
.doc-tab { flex: none; display: flex; height: 20px; font-family: Roboto, "Noto Sans CJK SC", sans-serif; white-space: nowrap; }
.tab-0 { width: 147px; }
.tab-1 { width: 116px; }
.tab-2 { width: 158px; }
.tab-3 { width: 191px; }
.doc-body { flex: 1; display: flex; align-items: center; justify-content: center; height: 20px; border: 1px solid #8d8d8d; border-width: 1px 1px 0 0; border-radius: 3px 3px 0 0; background: #f0f0f0; line-height: 18px; }
.doc-body.flat { border-top-left-radius: 0; }
.doc-tab.active { margin-left: -13px; font-weight: 700; }
.doc-tab.active .doc-body { background: #fff; }
.x { margin-left: 13px; }
.canvas { flex: 1; width: 100%; min-height: 0; background: #000; }
.cad { fill: #fff; font: 300 18px "Noto Sans CJK SC", sans-serif; }
.mark { fill: #f00; font: 20px "Liberation Serif", serif; }
.tiny { fill: #fff; font: 8px "Noto Sans CJK SC", sans-serif; }
.mid { text-anchor: middle; }
.sheets { display: flex; height: 17px; border-top: 1px solid #888; }
.nav { display: grid; place-items: center; width: 16px; height: 16px; }
.nav:first-child { width: 14px; }
.sheet-tab { position: relative; width: 48px; height: 16px; line-height: 14px; }
.sheet-tab svg { position: absolute; left: 0; top: 0; }
.sheet-tab span { position: relative; }
.sheet-tab.active { z-index: 1; font-weight: 700; }
.nav + .sheet-tab { margin-left: 2px; }
.command { flex: none; height: 20px; padding-left: 12px; overflow: hidden; line-height: 22px; background: linear-gradient(#cdcdcd 5px, #e6e6e6 5px); }
.command span { display: block; padding-top: 5px; }
.watermark { position: absolute; right: 14px; bottom: 8px; color: #b2b2b2; font: 18px/24px "Liberation Sans", Arial, sans-serif; text-shadow: 1px 1px 0 #777; }
</style>
